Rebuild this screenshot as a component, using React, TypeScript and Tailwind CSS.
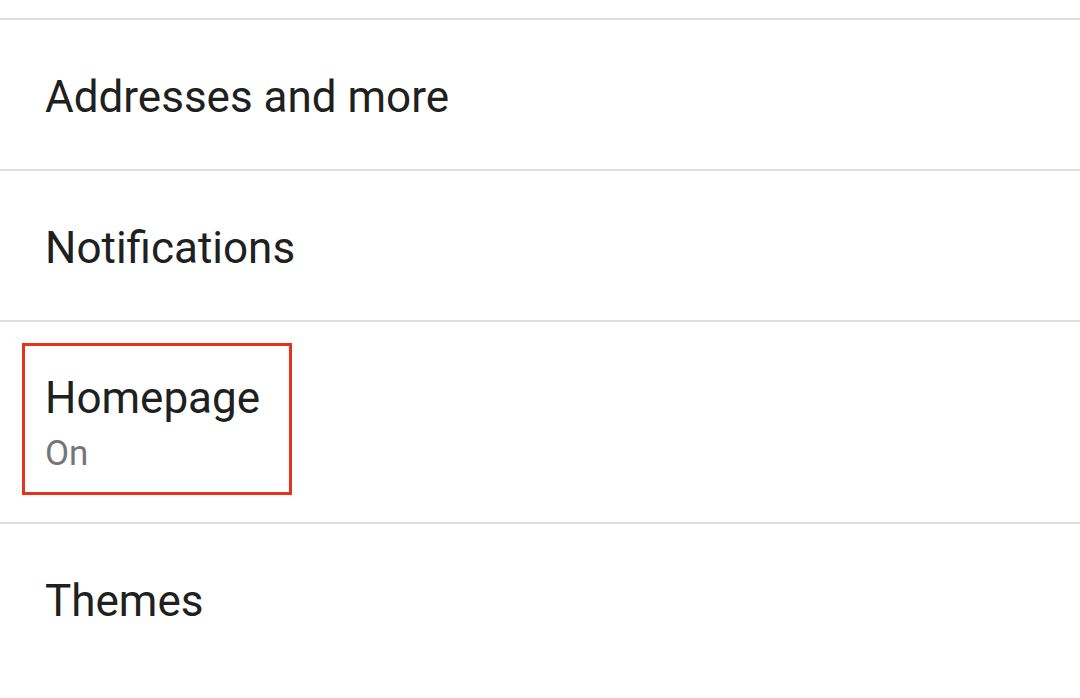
const font = { fontFamily: "Roboto, 'Noto Sans', sans-serif" };

function Divider() {
  return <div className="h-[2px] w-full bg-[#dedede]" />;
}

function Row({ label }: { label: string }) {
  return (
    <div className="flex h-[149px] items-center pl-[45px] pt-[4px]">
      <span className="text-[44px] leading-[52px] text-[#202020]">{label}</span>
    </div>
  );
}

export default function App() {
  return (
    <div className="h-[698px] w-[1080px] overflow-hidden bg-white" style={font}>
      <div className="h-[18px]" />
      <Divider />
      <Row label="Addresses and more" />
      <Divider />
      <Row label="Notifications" />
      <Divider />
      <div className="h-[200px] pl-[22px] pt-[21px]">
        <div className="h-[152px] w-[270px] border-[3px] border-[#e8331c] pl-[20px] pt-[26px]">
          <div className="text-[44px] leading-[52px] text-[#202020]">Homepage</div>
          <div className="mt-[8px] text-[35px] leading-[44px] text-[#757575]">On</div>
        </div>
      </div>
      <Divider />
      <Row label="Themes" />
    </div>
  );
}
